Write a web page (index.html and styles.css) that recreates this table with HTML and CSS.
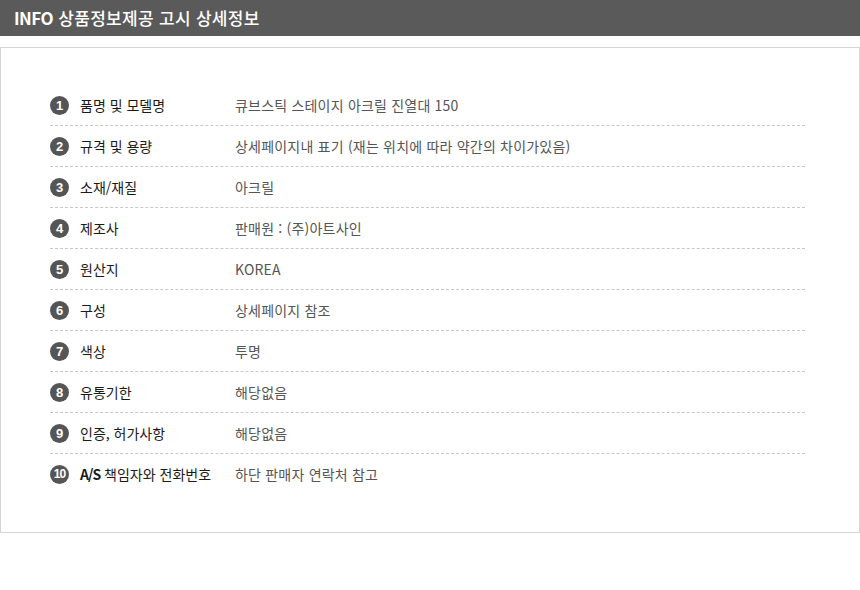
FILE: index.html
```html
<!DOCTYPE html>
<html lang="ko">
<head>
  <meta charset="UTF-8">
  <title>상품정보제공 고시</title>
  <link rel="stylesheet" href="styles.css">
</head>
<body>
  <div class="title-bar"><b>INFO</b> 상품정보제공 고시 상세정보</div>
  <div class="info-box">
    <ul class="info-list">
      <li><span class="label"><i class="num">1</i>품명 및 모델명</span><span class="value">큐브스틱 스테이지 아크릴 진열대 150</span></li>
      <li><span class="label"><i class="num">2</i>규격 및 용량</span><span class="value">상세페이지내 표기 (재는 위치에 따라 약간의 차이가있음)</span></li>
      <li><span class="label"><i class="num">3</i>소재/재질</span><span class="value">아크릴</span></li>
      <li><span class="label"><i class="num">4</i>제조사</span><span class="value">판매원 : (주)아트사인</span></li>
      <li><span class="label"><i class="num">5</i>원산지</span><span class="value">KOREA</span></li>
      <li><span class="label"><i class="num">6</i>구성</span><span class="value">상세페이지 참조</span></li>
      <li><span class="label"><i class="num">7</i>색상</span><span class="value">투명</span></li>
      <li><span class="label"><i class="num">8</i>유통기한</span><span class="value">해당없음</span></li>
      <li><span class="label"><i class="num">9</i>인증, 허가사항</span><span class="value">해당없음</span></li>
      <li><span class="label"><i class="num small">10</i><b>A/S</b>&nbsp;책임자와 전화번호</span><span class="value">하단 판매자 연락처 참고</span></li>
    </ul>
  </div>
</body>
</html>
```

FILE: styles.css
```css
body {
  margin: 0;
  background: #fff;
  font-family: "Noto Sans CJK KR", "Noto Sans", sans-serif;
}
.title-bar {
  height: 36px;
  line-height: 36px;
  padding-left: 14px;
  background: #5a5a5a;
  color: #fff;
  font-size: 17px;
  font-weight: 500;
  letter-spacing: 0.3px;
}
.title-bar b { font-weight: 700; letter-spacing: -0.5px; }
.info-box {
  margin-top: 11px;
  width: 858px;
  border: 1px solid #d6d6d6;
  padding: 37px 0 38px 0;
}
.info-list {
  list-style: none;
  margin: 0 54px 0 49px;
  padding: 0;
}
.info-list li {
  display: flex;
  align-items: center;
  height: 40px;
  border-bottom: 1px dashed #c8c8c8;
  font-size: 14px;
}
.info-list li:last-child { border-bottom: none; }
.label {
  display: flex;
  align-items: center;
  width: 185px;
  color: #1a1a1a;
}
.label b { font-weight: 700; letter-spacing: -1px; }
.num {
  display: inline-flex;
  align-items: center;
  justify-content: center;
  width: 19px;
  height: 19px;
  margin: 0 11px 0 0;
  border-radius: 50%;
  background: #555;
  color: #fff;
  font-style: normal;
  font-weight: 700;
  font-size: 13px;
  font-family: "Liberation Sans", Arial, sans-serif;
}
.num.small { font-size: 12px; letter-spacing: -1px; }
.value {
  color: #555;
  letter-spacing: 0.2px;
}
```
